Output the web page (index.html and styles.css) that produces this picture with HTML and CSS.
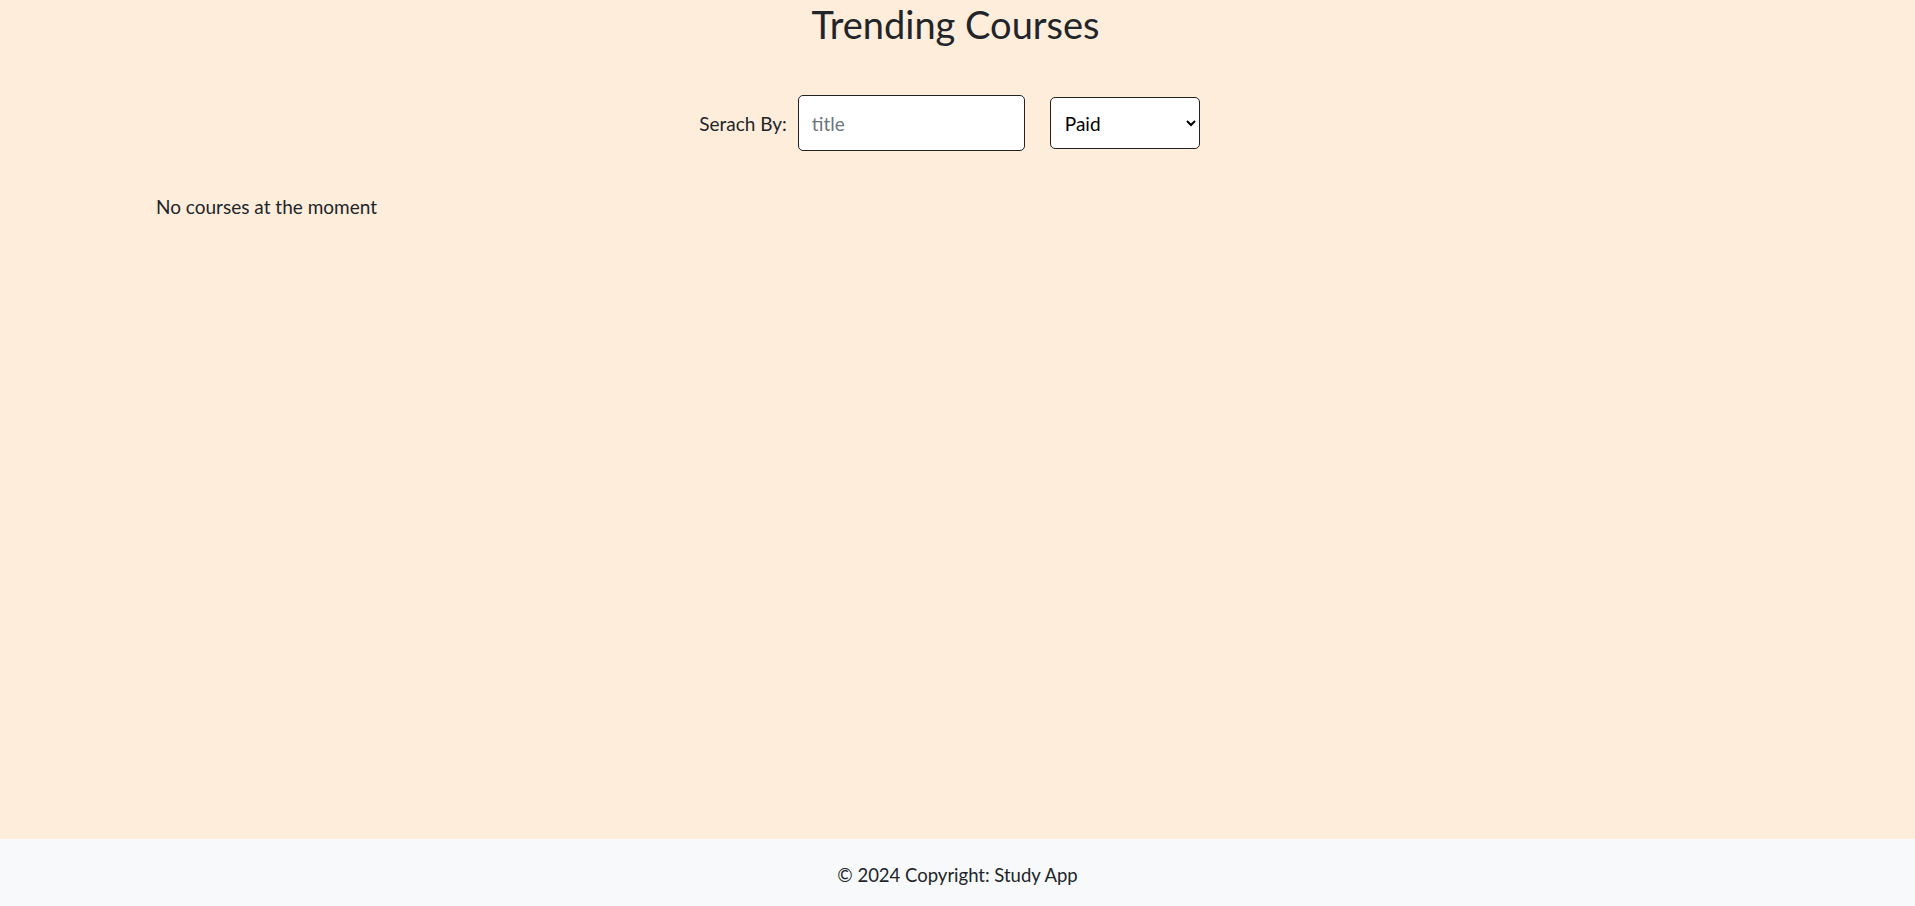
FILE: index.html
```html
<!DOCTYPE html>
<html lang="en">
<head>
    <meta charset="UTF-8">
    <meta name="viewport" content="width=device-width, initial-scale=1.0">
    <title>Study App - Trending Courses</title>
    <link rel="stylesheet" href="styles.css">
</head>
<body>
    <main class="page">
        <h1 class="title">Trending Courses</h1>

        <div class="search-bar">
            <label for="search-title" class="search-label">Serach By:</label>
            <input type="text" id="search-title" class="search-input" placeholder="title">
            <select id="search-type" class="search-select">
                <option>Paid</option>
                <option>Free</option>
            </select>
        </div>

        <div class="courses">
            <p class="empty">No courses at the moment</p>
        </div>
    </main>

    <footer class="footer">
        <p>&copy; 2024 Copyright: Study App</p>
    </footer>
</body>
</html>
```

FILE: styles.css
```css
* {
    box-sizing: border-box;
    margin: 0;
    padding: 0;
}
body {
    font-family: 'Lato', 'Open Sans', sans-serif;
    font-size: 19px;
    color: #212529;
    background-color: #ffeddb;
    display: flex;
    flex-direction: column;
    min-height: 100vh;
}

.page {
    flex: 1;
}

.title {
    font-size: 38px;
    font-weight: 400;
    line-height: 48px;
    text-align: center;
    margin-left: -4px;
}

/* search row */
.search-bar {
    display: flex;
    align-items: center;
    justify-content: center;
    margin-top: 47px;
    margin-right: 16px;
}
.search-label {
    margin-right: 11px;
}
.search-input {
    width: 227px;
    height: 56px;
    padding: 0 13px;
    border: 1px solid #222;
    border-radius: 5px;
    font-family: inherit;
    font-size: 19px;
    background-color: #fff;
}
.search-input::placeholder {
    color: #6c757d;
}
.search-select {
    width: 150px;
    height: 52px;
    margin-left: 25px;
    padding: 0 10px;
    border: 1px solid #222;
    border-radius: 5px;
    font-family: inherit;
    font-size: 19px;
    color: #000;
    background-color: #fff;
}

.courses {
    padding: 44px 156px;
}

.footer {
    height: 67px;
    padding-top: 4px;
    display: flex;
    align-items: center;
    justify-content: center;
    font-size: 18.5px;
    background-color: #f8f9fa;
}
```
